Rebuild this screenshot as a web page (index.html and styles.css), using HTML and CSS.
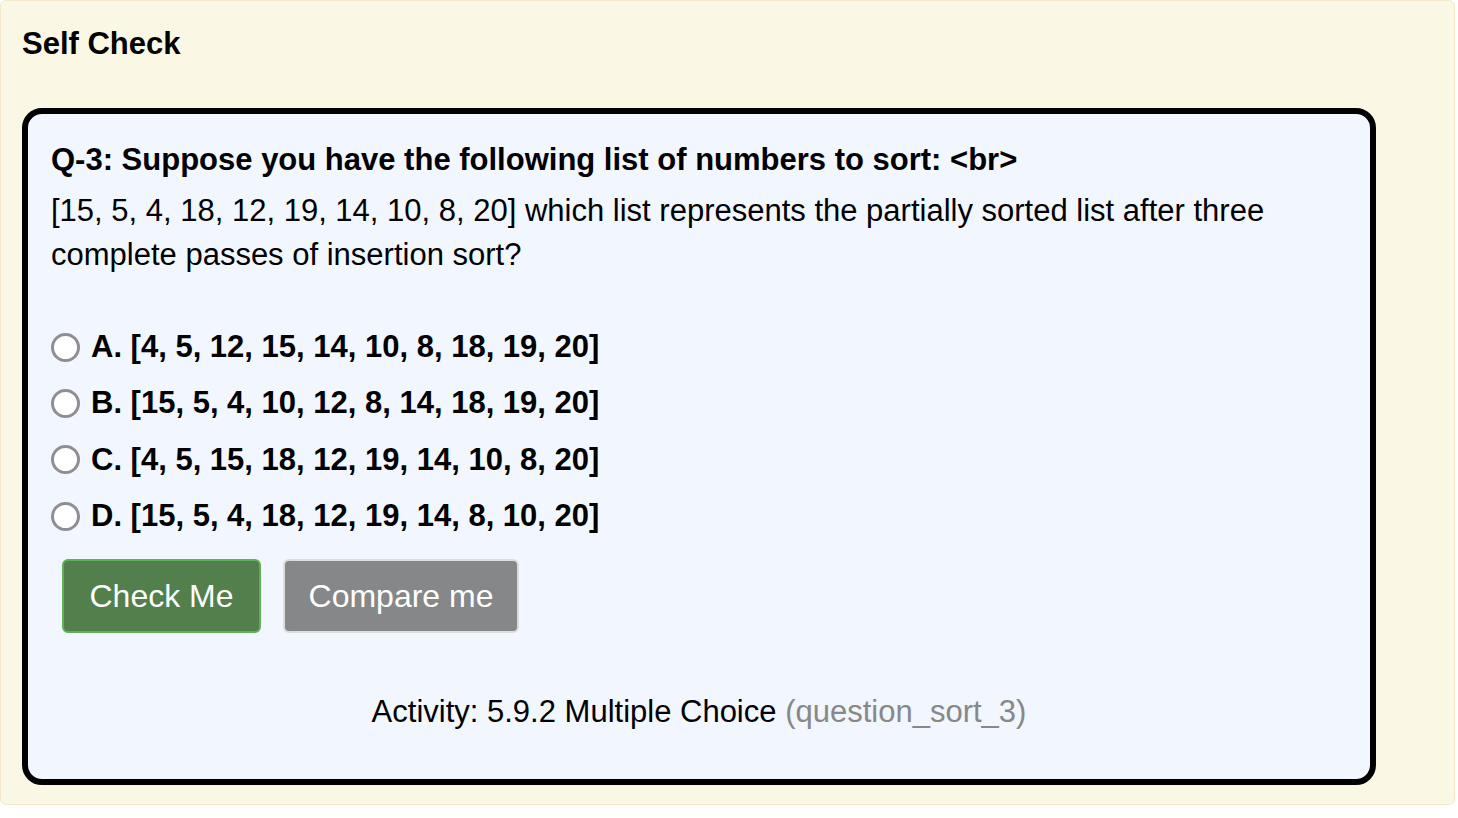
FILE: index.html
```html
<!DOCTYPE html>
<html>
<head>
<meta charset="utf-8">
<link rel="stylesheet" href="styles.css">
</head>
<body>
<div class="admonition">
  <h2 class="title">Self Check</h2>
  <div class="card">
    <div class="question">
      <p class="q-head">Q-3: Suppose you have the following list of numbers to sort: &lt;br&gt;</p>
      <p class="q-body">[15, 5, 4, 18, 12, 19, 14, 10, 8, 20] which list represents the partially sorted list after three complete passes of insertion sort?</p>
    </div>
    <ul class="options">
      <li class="option"><span class="radio"></span><span class="label">A. [4, 5, 12, 15, 14, 10, 8, 18, 19, 20]</span></li>
      <li class="option"><span class="radio"></span><span class="label">B. [15, 5, 4, 10, 12, 8, 14, 18, 19, 20]</span></li>
      <li class="option"><span class="radio"></span><span class="label">C. [4, 5, 15, 18, 12, 19, 14, 10, 8, 20]</span></li>
      <li class="option"><span class="radio"></span><span class="label">D. [15, 5, 4, 18, 12, 19, 14, 8, 10, 20]</span></li>
    </ul>
    <div class="buttons">
      <button class="btn btn-check">Check Me</button>
      <button class="btn btn-compare">Compare me</button>
    </div>
    <p class="activity">Activity: 5.9.2 Multiple Choice <span class="activity-id">(question_sort_3)</span></p>
  </div>
</div>
</body>
</html>
```

FILE: styles.css
```css
html, body {
  margin: 0;
  padding: 0;
  background: #ffffff;
}
body {
  font-family: "Liberation Sans", Arial, sans-serif;
  color: #000;
}
.admonition {
  box-sizing: border-box;
  width: 1455px;
  height: 805px;
  background: #fbf7e5;
  border: 1px solid #f3e8cb;
  border-radius: 6px;
  padding: 0 0 0 21px;
}
.title {
  margin: 0;
  padding-top: 24px;
  font-size: 31px;
  line-height: 38px;
  font-weight: bold;
}
.card {
  box-sizing: border-box;
  margin-top: 45px;
  width: 1354px;
  height: 677px;
  background: #f1f6ff;
  border: 6px solid #000;
  border-radius: 20px;
  padding: 24px 23px 0 23px;
}
.question p {
  margin: 0;
}
.q-head {
  font-size: 31px;
  font-weight: bold;
  line-height: 44px;
  margin-bottom: 7px !important;
}
.q-body {
  font-size: 31px;
  line-height: 44px;
}
.options {
  list-style: none;
  margin: 42px 0 0 0;
  padding: 0;
}
.option {
  display: flex;
  align-items: center;
  height: 56.3px;
  font-size: 31px;
  font-weight: bold;
}
.radio {
  box-sizing: border-box;
  width: 29px;
  height: 29px;
  border: 3px solid #8e8e93;
  border-radius: 50%;
  background: #fff;
  margin-right: 11px;
  flex: none;
}
.buttons {
  display: flex;
  gap: 22px;
  margin: 15px 0 0 11px;
}
.btn {
  box-sizing: border-box;
  height: 74px;
  border-radius: 6px;
  font-family: "Liberation Sans", Arial, sans-serif;
  font-size: 32px;
  color: #fff;
  padding: 0;
}
.btn-check {
  width: 199px;
  background: #527f4b;
  border: 2px solid #5fb058;
}
.btn-compare {
  width: 236px;
  background: #858789;
  border: 2px solid #dcdcdc;
}
.activity {
  margin: 61px 0 0 0;
  text-align: center;
  font-size: 31px;
  line-height: 36px;
}
.activity-id {
  color: #888888;
}
```
